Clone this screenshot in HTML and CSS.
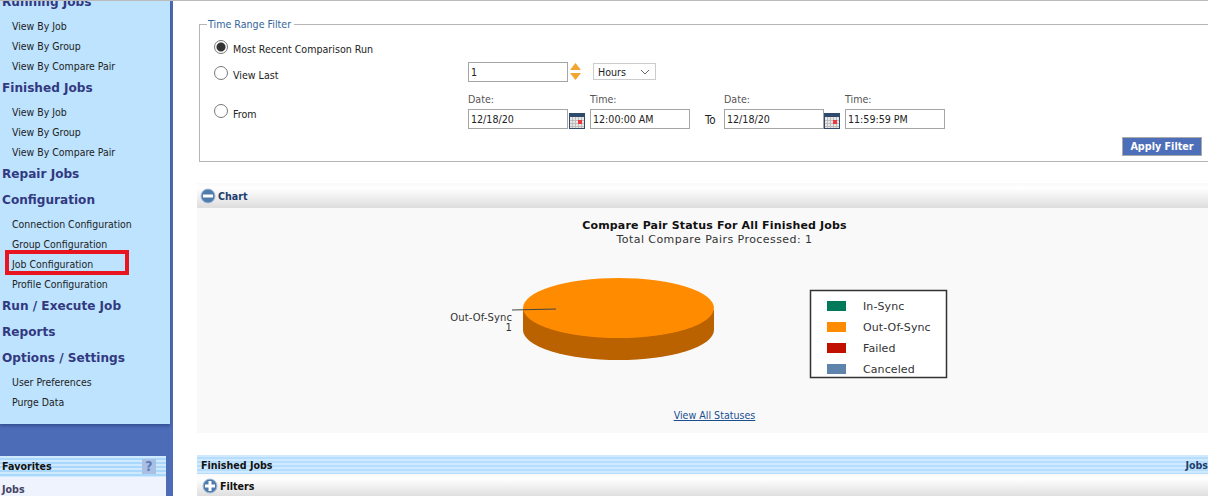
FILE: index.html
```html
<!DOCTYPE html>
<html lang="en">

<head>
  <meta charset="UTF-8">
  <title>Job Configuration</title>
  <link rel="stylesheet" href="styles.css">
</head>

<body>
  <div class="page">
    <!-- Left navigation -->
    <aside class="sidebar">
      <nav class="nav">
        <h2 class="nav-head">Running Jobs</h2>
        <a class="nav-item">View By Job</a>
        <a class="nav-item">View By Group</a>
        <a class="nav-item">View By Compare Pair</a>
        <h2 class="nav-head">Finished Jobs</h2>
        <a class="nav-item">View By Job</a>
        <a class="nav-item">View By Group</a>
        <a class="nav-item">View By Compare Pair</a>
        <h2 class="nav-head">Repair Jobs</h2>
        <h2 class="nav-head">Configuration</h2>
        <a class="nav-item">Connection Configuration</a>
        <a class="nav-item">Group Configuration</a>
        <a class="nav-item nav-marked">Job Configuration</a>
        <a class="nav-item">Profile Configuration</a>
        <h2 class="nav-head">Run / Execute Job</h2>
        <h2 class="nav-head">Reports</h2>
        <h2 class="nav-head">Options / Settings</h2>
        <a class="nav-item">User Preferences</a>
        <a class="nav-item">Purge Data</a>
      </nav>
      <div class="favorites">
        <div class="favorites-head">
          <span>Favorites</span>
          <span class="help">?</span>
        </div>
        <div class="favorites-body">Jobs</div>
      </div>
    </aside>

    <main class="content">
      <!-- Time range form -->
      <fieldset class="filter">
        <legend>Time Range Filter</legend>
        <div class="row row-recent">
          <label class="choice"><span class="radio radio-on"></span>Most Recent Comparison Run</label>
        </div>
        <div class="row row-last">
          <label class="choice"><span class="radio"></span>View Last</label>
          <input class="field" type="text" value="1">
          <svg class="spinner" width="13" height="18" viewBox="0 0 13 18">
            <path d="M6.5 0 L12 7 H1 Z" fill="#f2a530" />
            <path d="M1 10 H12 L6.5 17 Z" fill="#f2a530" />
          </svg>
          <div class="select">Hours
            <svg width="10" height="6" viewBox="0 0 10 6">
              <path d="M1 1 L5 5 L9 1" fill="none" stroke="#666" />
            </svg>
          </div>
        </div>
        <div class="row row-from">
          <label class="choice"><span class="radio"></span>From</label>
          <div class="stack">
            <span class="caption">Date:</span>
            <input class="field" type="text" value="12/18/20">
          </div>
          <svg class="cal" width="16" height="16" viewBox="0 0 16 16">
            <rect x="0.5" y="0.5" width="15" height="15" fill="#e8e8e8" stroke="#2f4a6b" />
            <rect width="16" height="4" fill="#2f4a6b" />
            <path d="M1 7.5 H15 M1 10.5 H15 M1 13.5 H15 M3.5 4 V15 M6.5 4 V15 M9.5 4 V15 M12.5 4 V15" stroke="#bdbdbd" />
            <rect x="9" y="7" width="4" height="4" fill="#f0353f" />
          </svg>
          <div class="stack stack-time">
            <span class="caption">Time:</span>
            <input class="field" type="text" value="12:00:00 AM">
          </div>
          <span class="to">To</span>
          <div class="stack">
            <span class="caption">Date:</span>
            <input class="field" type="text" value="12/18/20">
          </div>
          <svg class="cal cal-end" width="16" height="16" viewBox="0 0 16 16">
            <rect x="0.5" y="0.5" width="15" height="15" fill="#e8e8e8" stroke="#2f4a6b" />
            <rect width="16" height="4" fill="#2f4a6b" />
            <path d="M1 7.5 H15 M1 10.5 H15 M1 13.5 H15 M3.5 4 V15 M6.5 4 V15 M9.5 4 V15 M12.5 4 V15" stroke="#bdbdbd" />
            <rect x="9" y="7" width="4" height="4" fill="#f0353f" />
          </svg>
          <div class="stack stack-time">
            <span class="caption">Time:</span>
            <input class="field" type="text" value="11:59:59 PM">
          </div>
        </div>
        <div class="row row-apply">
          <button class="apply" type="button">Apply Filter</button>
        </div>
      </fieldset>

      <!-- Chart section -->
      <div class="bar bar-chart">
        <svg class="toggle" width="16" height="16" viewBox="0 0 16 16">
          <circle cx="8" cy="8" r="7" fill="#4f7bad" stroke="#a3bcd8" />
          <rect x="3" y="6.5" width="10" height="3" fill="#fff" />
        </svg>
        <span>Chart</span>
      </div>
      <div class="chart">
        <svg class="chart-img" width="1011" height="196" viewBox="0 0 1011 196">
          <text class="chart-title" x="517.5" y="21" text-anchor="middle">Compare Pair Status For All Finished Jobs</text>
          <text class="chart-sub" x="517.5" y="35" text-anchor="middle">Total Compare Pairs Processed: 1</text>
          <path d="M326 102 V122 A95.5 30 0 0 0 517 122 V102 Z" fill="#bb6200" />
          <ellipse cx="421.5" cy="100" rx="95.5" ry="30" fill="#ff8c00" />
          <path d="M315 102 L359 101" stroke="#444" fill="none" />
          <text class="chart-label" x="315" y="113" text-anchor="end">Out-Of-Sync</text>
          <text class="chart-label" x="315" y="123" text-anchor="end">1</text>
          <rect x="613.5" y="82.5" width="136" height="87" fill="#fff" stroke="#333" stroke-width="1.5" />
          <rect x="630" y="93" width="19" height="10" fill="#007a5a" />
          <rect x="630" y="114" width="19" height="10" fill="#ff8c00" />
          <rect x="630" y="135" width="19" height="10" fill="#c01000" />
          <rect x="630" y="156" width="19" height="10" fill="#5f84ab" />
          <text class="chart-text" x="666" y="102">In-Sync</text>
          <text class="chart-text" x="666" y="123">Out-Of-Sync</text>
          <text class="chart-text" x="666" y="144">Failed</text>
          <text class="chart-text" x="666" y="165">Canceled</text>
        </svg>
        <a class="statuses">View All Statuses</a>
      </div>

      <!-- Finished jobs grid -->
      <div class="stripes">
        <span>Finished Jobs</span>
        <span class="stripes-right">Jobs</span>
      </div>
      <div class="bar bar-filters">
        <svg class="toggle" width="16" height="16" viewBox="0 0 16 16">
          <circle cx="8" cy="8" r="7" fill="#4f7bad" stroke="#a3bcd8" />
          <path d="M3 6.5 H6.5 V3 H9.5 V6.5 H13 V9.5 H9.5 V13 H6.5 V9.5 H3 Z" fill="#fff" />
        </svg>
        <span>Filters</span>
      </div>
    </main>
  </div>
</body>

</html>
```

FILE: styles.css
```css
html,
body {
  margin: 0;
  height: 100%;
  overflow: hidden;
  background: #fff;
}

body {
  font-family: "DejaVu Sans Condensed", "Open Sans", "Liberation Sans", Arial, sans-serif;
  font-size: 10.6px;
  color: #222;
}

.page {
  display: flex;
  height: 495px;
  border-top: 1px solid #bbb;
  overflow: hidden;
}

/* Styling for the left column */
.sidebar {
  flex: 0 0 173px;
  width: 173px;
  background: #4d6cb8;
  display: flex;
  flex-direction: column;
}

.nav {
  flex: none;
  position: relative;
  width: 170px;
  height: 423px;
  box-sizing: border-box;
  padding-top: 1px;
  background: #bde3ff;
  overflow: hidden;
  box-shadow: 0 2px 3px rgba(30, 50, 110, 0.5);
}

.nav-head {
  margin: 0;
  padding: 0 0 4px 2px;
  height: 22px;
  line-height: 24px;
  font-family: "DejaVu Sans", Verdana, sans-serif;
  font-size: 12.1px;
  font-weight: bold;
  color: #33397f;
}

.nav-head:first-child {
  margin-top: -12px;
}

.nav-item {
  display: block;
  height: 20px;
  line-height: 20px;
  padding-left: 12px;
  font-size: 10.45px;
}

.nav-marked {
  position: relative;
}

.nav-marked::after {
  content: "";
  position: absolute;
  left: 5px;
  top: -4px;
  width: 116px;
  height: 17px;
  border: 4px solid #e8141f;
}

.favorites {
  flex: none;
  width: 166px;
  margin-top: 32px;
}

.favorites-head {
  display: flex;
  justify-content: space-between;
  align-items: center;
  height: 21px;
  padding: 0 10px 0 2px;
  font-weight: bold;
  color: #111;
  background: repeating-linear-gradient(#cfeaff 0, #cfeaff 2px, #a9d8fb 2px, #a9d8fb 4px);
}

.favorites-head span:first-child {
  padding-bottom: 2px;
}

.help {
  width: 14px;
  height: 15px;
  line-height: 15px;
  text-align: center;
  font-size: 14px;
  font-weight: bold;
  color: #5d79b5;
  background: #a9bfe4;
}

.favorites-body {
  height: 40px;
  padding: 6px 2px;
  font-weight: bold;
  color: #444466;
  background: #eef3fd;
}

/* Styling for the main column */
.content {
  flex: 1;
  min-width: 0;
  padding-left: 24px;
}

.filter {
  margin: 17px -12px 0 2px;
  padding: 0 12px 5px 14px;
  height: 137px;
  border: 1px solid #b5b5b5;
}

.filter legend {
  padding: 0 3px 0 1px;
  margin-left: -7px;
  color: #336699;
}

.row {
  display: flex;
}

.row-recent {
  height: 20px;
  margin-top: 8px;
  align-items: center;
}

.row-last {
  height: 21px;
  margin-top: 3px;
  align-items: center;
}

.row-last .choice {
  margin-top: 6px;
}

.row-from {
  margin-top: 11px;
  align-items: flex-end;
}

.row-from .choice {
  margin-bottom: 6px;
}

.row-from .radio {
  top: -3px;
}

.row-apply {
  justify-content: flex-end;
  margin: 8px 5px 0 0;
}

.choice {
  flex: 0 0 254px;
  display: flex;
  align-items: center;
  height: 20px;
  box-sizing: border-box;
  padding-top: 1px;
}

.radio {
  width: 12px;
  height: 12px;
  margin-right: 5px;
  border: 1px solid #777;
  border-radius: 50%;
  background: #fff;
  position: relative;
  top: -2px;
}

.radio-on {
  background: radial-gradient(circle, #333 0, #333 4px, #fff 5px);
}

.field {
  width: 100px;
  height: 20px;
  box-sizing: border-box;
  padding: 0 2px;
  border: 1px solid #a5a5a5;
  font: inherit;
  color: #222;
}

.spinner {
  margin: 0 11px 0 1px;
}

.select {
  display: flex;
  align-items: center;
  justify-content: space-between;
  width: 63px;
  height: 17px;
  box-sizing: border-box;
  padding: 0 5px 0 4px;
  border: 1px solid #ccc;
}

.stack {
  display: flex;
  flex-direction: column;
  gap: 3px;
}

.caption {
  height: 13px;
  line-height: 13px;
  color: #555;
}

.stack-time {
  margin-left: 6px;
}

.cal {
  flex: none;
  margin-left: 1px;
  margin-right: -1px;
}

.cal-end {
  margin-left: 0;
}

.to {
  width: 34px;
  height: 20px;
  line-height: 22px;
  padding-left: 15px;
  box-sizing: border-box;
  font-size: 11.5px;
}

.apply {
  width: 80px;
  height: 19px;
  padding: 0;
  border: 1px solid #aaa;
  background: #4d6fb9;
  color: #fff;
  font: bold 10.7px "DejaVu Sans Condensed", "Open Sans", sans-serif;
}

.bar {
  display: flex;
  align-items: center;
  gap: 2px;
  font-weight: bold;
  background: linear-gradient(#f9f9f9, #fff 20%, #ddd);
}

.bar-chart {
  height: 25px;
  margin-top: 21px;
  padding-left: 3px;
  color: #1d3f6e;
}

.bar-filters {
  height: 23px;
  padding-left: 5px;
  color: #111;
}

.toggle {
  flex: none;
}

.chart {
  height: 225px;
  background: #f9f9f9;
  text-align: center;
}

.chart-img {
  display: block;
}

.chart-title {
  font: bold 11px "DejaVu Sans", sans-serif;
  letter-spacing: 0.17px;
  fill: #111;
}

.chart-sub {
  font: 11px "DejaVu Sans", sans-serif;
  letter-spacing: 0.44px;
  fill: #333;
}

.chart-text {
  font: 11px "DejaVu Sans", sans-serif;
  letter-spacing: 0.1px;
  fill: #333;
}

.chart-label {
  font: 10px "DejaVu Sans", sans-serif;
  letter-spacing: 0.1px;
  fill: #333;
}

.statuses {
  display: block;
  margin-top: 5px;
  padding-left: 24px;
  color: #1a4f8f;
  text-decoration: underline;
}

.stripes {
  display: flex;
  justify-content: space-between;
  align-items: center;
  height: 19px;
  margin-top: 22px;
  padding-left: 4px;
  font-weight: bold;
  color: #111;
  background: repeating-linear-gradient(#cfeaff 0, #cfeaff 2px, #b6defc 2px, #b6defc 4px);
}

.stripes-right {
  color: #1d3f6e;
}
```
